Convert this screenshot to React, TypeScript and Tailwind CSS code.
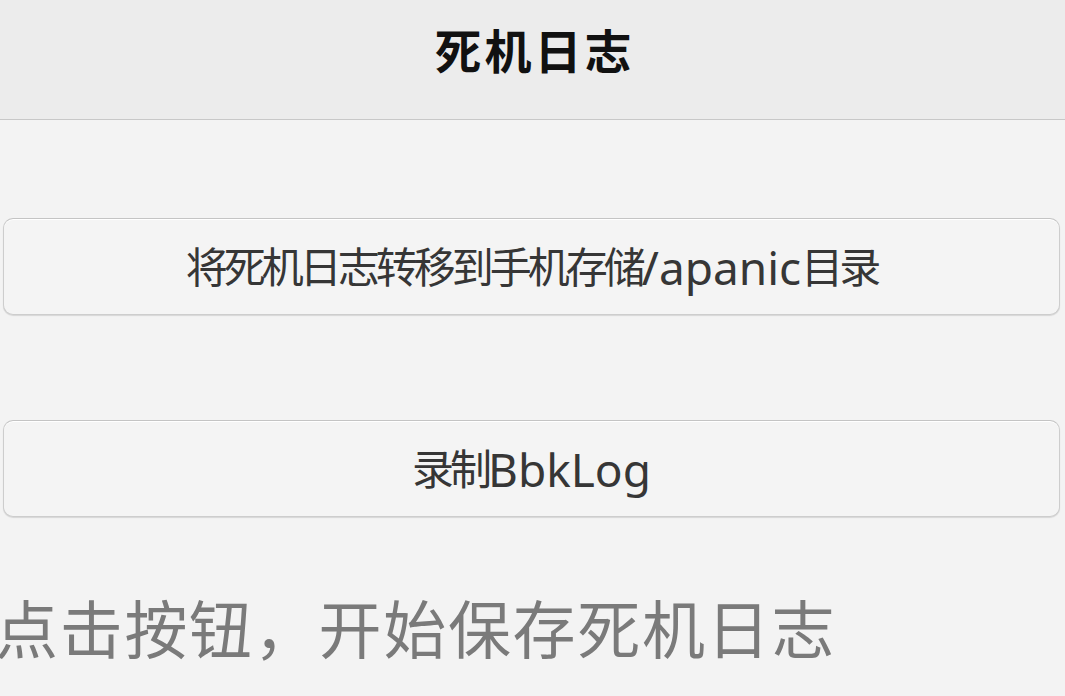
const FONT = "font-['Noto_Sans','Noto_Sans_CJK_SC',sans-serif]";

function Cjk({ children }: { children: string }) {
  return <span className="tracking-[-4px]">{children}</span>;
}

function Latin({ children }: { children: string }) {
  return <span className="text-[46px] tracking-[0px]">{children}</span>;
}

function ActionButton({ children }: { children: React.ReactNode }) {
  return (
    <button
      type="button"
      className="flex h-[97px] w-full items-center justify-center rounded-[10px] border border-[#cdcdcd] border-t-[#c4c4c4] bg-[#f4f4f4] text-[42px] leading-none text-[#363636] shadow-[0_1px_1px_rgba(0,0,0,0.12),inset_0_1px_0_#ffffff]"
    >
      {children}
    </button>
  );
}

export default function App() {
  return (
    <div className={`${FONT} h-[696px] w-[1065px] overflow-hidden bg-[#f3f3f3]`}>
      <header className="flex h-[120px] items-center justify-center border-b border-[#c8c8c8] bg-[#ececec] pb-[16px]">
        <h1 className="ml-[4px] text-[47px] font-bold leading-none tracking-[3px] text-[#111]">死机日志</h1>
      </header>

      <div className="flex flex-col gap-[105px] pl-[3px] pr-[5px] pt-[98px]">
        <ActionButton>
          <Cjk>将死机日志转移到手机存储</Cjk>
          <Latin>/apanic</Latin>
          <Cjk>目录</Cjk>
        </ActionButton>
        <ActionButton>
          <Cjk>录制</Cjk>
          <Latin>BbkLog</Latin>
        </ActionButton>
      </div>

      <p className="ml-[-5px] mt-[80px] whitespace-nowrap text-[63px] leading-none tracking-[1.7px] text-[#7a7a7a]">
        点击按钮，开始保存死机日志
      </p>
    </div>
  );
}
